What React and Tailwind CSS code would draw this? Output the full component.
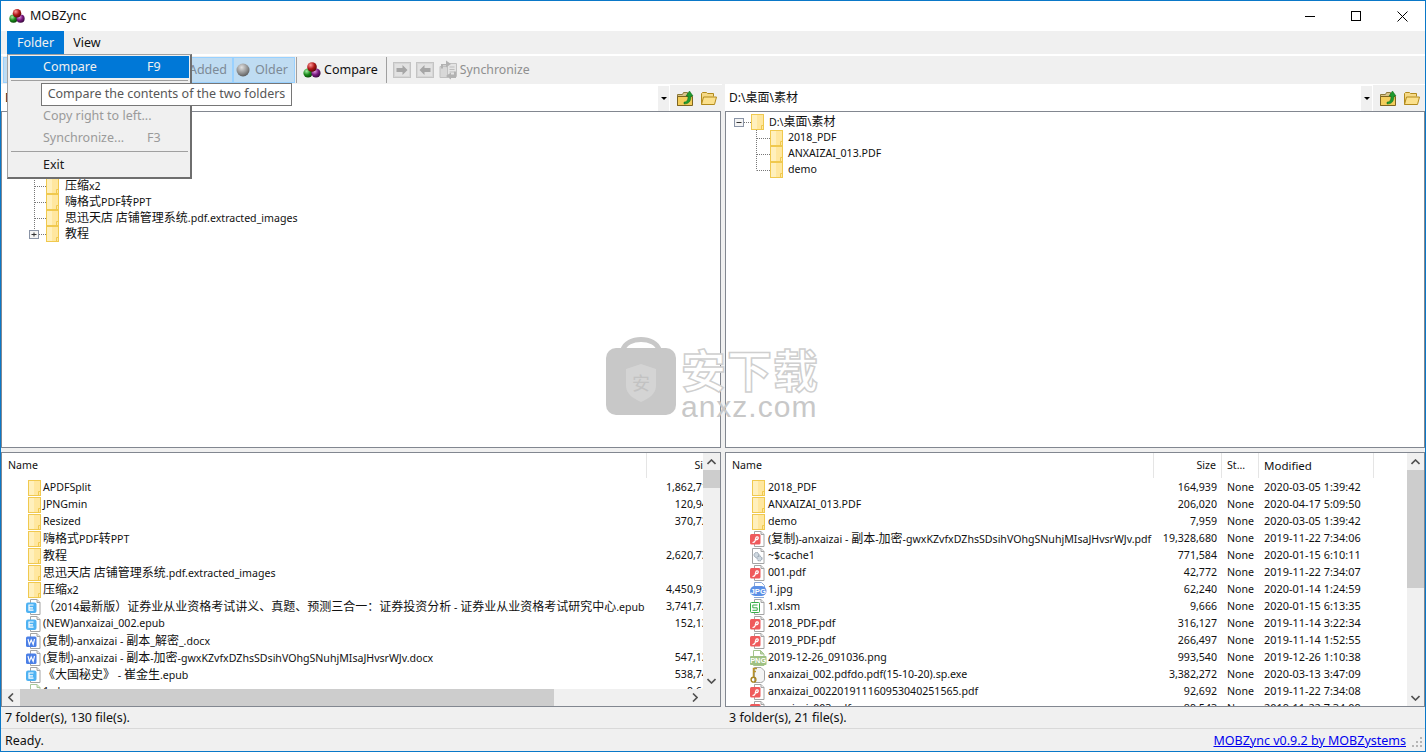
import React from "react";

const Balls = ({ s = 18 }) => (
  <svg width={s} height={s} viewBox="0 0 18 18" className="shrink-0">
    <defs>
      <radialGradient id="br" cx=".35" cy=".3" r=".8"><stop offset="0" stopColor="#ff9a9a" /><stop offset=".5" stopColor="#b01818" /><stop offset="1" stopColor="#4a0505" /></radialGradient>
      <radialGradient id="bg" cx=".35" cy=".3" r=".8"><stop offset="0" stopColor="#a5efa5" /><stop offset=".5" stopColor="#1a8a1a" /><stop offset="1" stopColor="#053a05" /></radialGradient>
      <radialGradient id="bp" cx=".35" cy=".3" r=".8"><stop offset="0" stopColor="#e8a0e8" /><stop offset=".5" stopColor="#7a1a80" /><stop offset="1" stopColor="#2a0530" /></radialGradient>
    </defs>
    <circle cx="5" cy="12" r="4.6" fill="url(#bg)" />
    <circle cx="13" cy="12" r="4.6" fill="url(#bp)" />
    <circle cx="9" cy="6" r="4.8" fill="url(#br)" />
  </svg>
);

const Folder = () => (
  <svg width="13" height="16" viewBox="0 0 13 16" className="shrink-0">
    <rect x=".5" y=".5" width="12" height="15" fill="#ffe79f" stroke="#f0c94f" />
    <rect x="1" y="1" width="5" height="14" fill="#fff0bd" />
    <path d="M10.500 15.500v-4h2" fill="none" stroke="#f0c94f" />
  </svg>
);

const Page = ({ stroke = "#a4a4a4" }) => (
  <>
    <path d="M4.500.5h6.500l3 3v12h-9.500z" fill="#fff" stroke={stroke} />
    <path d="M11 .5v3h3" fill="#e8e8e8" stroke={stroke} />
  </>
);

const Icon16 = ({ children }) => (
  <svg width="15" height="16" viewBox="0 0 15 16" className="shrink-0">{children}</svg>
);

const ICONS = {
  e: (
    <Icon16>
      <Page />
      <rect x="0" y="3.500" width="10.500" height="10.500" rx="2" fill="#4fb2f2" />
      <path d="M7.500 6H3v2.800h4M3 8.800v2.400h4.500" fill="none" stroke="#fff" strokeWidth="1.200" />
    </Icon16>
  ),
  w: (
    <Icon16>
      <Page />
      <rect x="0" y="3.500" width="10.500" height="10.500" rx="1.500" fill="#4b7fe6" />
      <path d="M2 6l1.300 5.500L5.200 7l2 4.500L8.500 6" fill="none" stroke="#fff" strokeWidth="1.100" />
    </Icon16>
  ),
  p: (
    <Icon16>
      <Page />
      <rect x="0" y="3" width="10.500" height="10.500" rx="1.500" fill="#ef5a5c" />
      <path d="M2.500 11.500c1.500 0 2.200-.6 2.500-1.500l1-3.500c.3-1 2.500-.9 2.300.6-.2 1.300-2 1.800-3.500 1.600" fill="none" stroke="#fff" strokeWidth="1.200" />
    </Icon16>
  ),
  j: (
    <svg width="17" height="16" viewBox="0 0 17 16" className="shrink-0">
      <path d="M4.500.5h7l3 3v4h-10z" fill="#fff" stroke="#8aa8d8" />
      <path d="M4 15.500h10" stroke="#8aa8d8" />
      <rect x="0" y="4" width="16.500" height="10" rx="5" fill="#5b90e6" />
      <text x="8.200" y="11.800" fontSize="7.600" textAnchor="middle" fill="#fff" fontFamily="Liberation Sans" fontWeight="bold">JPG</text>
    </svg>
  ),
  n: (
    <svg width="17" height="16" viewBox="0 0 17 16" className="shrink-0">
      <path d="M3.500.5h7l3.500 3.500v11.500h-10.500z" fill="#fff" stroke="#a4c48c" />
      <path d="M10.500.5V4h3.500z" fill="#bcd4a8" stroke="#a4c48c" />
      <rect x="0" y="6" width="16.500" height="9" rx="1" fill="#9fc182" />
      <text x="8.200" y="13" fontSize="7.400" textAnchor="middle" fill="#fff" fontFamily="Liberation Sans" fontWeight="bold">PNG</text>
    </svg>
  ),
  x: (
    <Icon16>
      <Page />
      <rect x=".5" y="3.500" width="9" height="10" rx="1" fill="#fff" stroke="#35ad47" />
      <path d="M7.500 6H2.800v2.800h4.400v2.500H2.500" fill="none" stroke="#35ad47" />
    </Icon16>
  ),
  k: (
    <Icon16>
      <path d="M4.500.5h6.500l3.500 3.500v8c0 2-2 3.500-4 3.500H4.500z" fill="#f4f4f4" stroke="#a4a4a4" />
      <circle cx="3.500" cy="12.700" r="2.400" fill="none" stroke="#a88420" strokeWidth="1.400" />
      <path d="M3.500 10V1.500h3.500M3.500 4.500h2.500" stroke="#b8932a" strokeWidth="1.500" fill="none" />
    </Icon16>
  ),
  g: (
    <Icon16>
      <path d="M2.500.5h8.500l3 3v12H2.500z" fill="#fff" stroke="#a4a4a4" />
      <path d="M11 .5v3h3" fill="#e8e8e8" stroke="#a4a4a4" />
      <circle cx="6.500" cy="7" r="2.500" fill="#cfd8e0" stroke="#8a98a6" strokeDasharray="1.500 .8" />
      <circle cx="9.500" cy="10.500" r="2.500" fill="#cfd8e0" stroke="#8a98a6" strokeDasharray="1.500 .8" />
    </Icon16>
  ),
  b: (
    <Icon16>
      <path d="M4.500.5h6.500l3 3v12h-9.500z" fill="#fff" stroke="#a8c89a" />
      <path d="M11 .5v3h3" fill="#dcebd0" stroke="#a8c89a" />
    </Icon16>
  ),
};

const leftRows = [
  ["f", "APDFSplit", "1,862,712"],
  ["f", "JPNGmin", "120,948"],
  ["f", "Resized", "370,725"],
  ["f", "嗨格式PDF转PPT", ""],
  ["f", "教程", "2,620,733"],
  ["f", "思迅天店 店铺管理系统.pdf.extracted_images", ""],
  ["f", "压缩x2", "4,450,916"],
  ["e", "（2014最新版）证券业从业资格考试讲义、真题、预测三合一：证券投资分析 - 证券业从业资格考试研究中心.epub", "3,741,720"],
  ["e", "(NEW)anxaizai_002.epub", "152,134"],
  ["w", "(复制)-anxaizai - 副本_解密_.docx", ""],
  ["w", "(复制)-anxaizai - 副本-加密-gwxKZvfxDZhsSDsihVOhgSNuhjMIsaJHvsrWJv.docx", "547,128"],
  ["e", "《大国秘史》 - 崔金生.epub", "538,740"],
  ["b", "1.xlsm", "9,666"],
];

const rightRows = [
  ["f", "2018_PDF", "164,939", "2020-03-05 1:39:42"],
  ["f", "ANXAIZAI_013.PDF", "206,020", "2020-04-17 5:09:50"],
  ["f", "demo", "7,959", "2020-03-05 1:39:42"],
  ["p", "(复制)-anxaizai - 副本-加密-gwxKZvfxDZhsSDsihVOhgSNuhjMIsaJHvsrWJv.pdf", "19,328,680", "2019-11-22 7:34:06"],
  ["g", "~$cache1", "771,584", "2020-01-15 6:10:11"],
  ["p", "001.pdf", "42,772", "2019-11-22 7:34:07"],
  ["j", "1.jpg", "62,240", "2020-01-14 1:24:59"],
  ["x", "1.xlsm", "9,666", "2020-01-15 6:13:35"],
  ["p", "2018_PDF.pdf", "316,127", "2019-11-14 3:22:34"],
  ["p", "2019_PDF.pdf", "266,497", "2019-11-14 1:52:55"],
  ["n", "2019-12-26_091036.png", "993,540", "2019-12-26 1:10:38"],
  ["k", "anxaizai_002.pdfdo.pdf(15-10-20).sp.exe", "3,382,272", "2020-03-13 3:47:09"],
  ["p", "anxaizai_002201911160953040251565.pdf", "92,692", "2019-11-22 7:34:08"],
  ["p", "anxaizai_003.pdf", "89,543", "2019-11-22 7:34:09"],
];

/* Latin runs take the parent's small size, Chinese runs stay at 12px */
const T = ({ children }) =>
  String(children)
    .split(/([\u3000-\u9fff\uff00-\uffef]+)/)
    .map((part, i) =>
      i % 2 ? (
        <span key={i} className="text-[12px]">{part}</span>
      ) : (
        <span key={i}>{part}</span>
      )
    );

const Conn = ({ kind }) => (
  <svg width="18" height="16" viewBox="0 0 18 16" className="shrink-0">
    <path d={kind === "plus" ? "M6.500 0v8.500" : "M6.500 0v16"} stroke="#777" strokeDasharray="1 1" fill="none" />
    <path d="M7 8.500h11" stroke="#777" strokeDasharray="1 1" fill="none" />
    {kind === "plus" && (
      <>
        <rect x="1.500" y="4.500" width="9" height="8" fill="#f4f4f4" stroke="#8a94a6" />
        <path d="M3.500 8.500h5M6 6.500v4" stroke="#333" />
      </>
    )}
  </svg>
);

const LTree = ({ kind, name }) => (
  <div className="flex h-4 items-center pl-[26px]">
    <Conn kind={kind} />
    <Folder />
    <span className="ml-[6px] whitespace-nowrap"><T>{name}</T></span>
  </div>
);

const RChild = ({ name, last }) => (
  <div className="flex h-4 items-center pl-[30px]">
    <svg width="14" height="16" viewBox="0 0 14 16" className="shrink-0">
      <path d={last ? "M.5 0v8.500" : "M.5 0v16"} stroke="#777" strokeDasharray="1 1" fill="none" />
      <path d="M1 8.500h13" stroke="#777" strokeDasharray="1 1" fill="none" />
    </svg>
    <Folder />
    <span className="ml-[5px] -translate-y-px whitespace-nowrap"><T>{name}</T></span>
  </div>
);

const Arrow = ({ d }) => (
  <svg width="9" height="6" viewBox="0 0 9 6" className="shrink-0">
    <path d={d} fill="none" stroke="#505050" strokeWidth="1.600" />
  </svg>
);

const VScroll = ({ thumb }) => (
  <div className="flex w-[17px] shrink-0 flex-col bg-[#f0f0f0]">
    <div className="flex h-[17px] shrink-0 items-center justify-center"><Arrow d="M.5 5l4-4 4 4" /></div>
    <div className={`shrink-0 bg-[#cdcdcd] ${thumb}`} />
    <div className="flex-1" />
    <div className="flex h-[17px] shrink-0 items-center justify-center"><Arrow d="M.5 1l4 4 4-4" /></div>
  </div>
);

const HeadCell = ({ className, children, sep = true }) => (
  <div className={`flex h-full shrink-0 items-center overflow-hidden whitespace-nowrap ${sep ? "border-r border-[#e5e5e5]" : ""} ${className}`}>{children}</div>
);

const PathBar = ({ path, grow }) => (
  <div className={`flex h-[27px] bg-white ${grow}`}>
    <div className="flex min-w-0 flex-1 items-center pl-[4px] whitespace-nowrap">{path}</div>
    <div className="mt-[2px] flex h-[25px] w-[11px] shrink-0 items-center justify-center bg-[#f0f0f0]">
      <div className="h-0 w-0 border-x-[3px] border-t-[3px] border-x-transparent border-t-black" />
    </div>
    <div className="ml-[1px] mt-[1px] flex h-[26px] w-[52px] shrink-0 items-center gap-[6px] bg-[#f0f0f0] pl-[7px]">
      <svg width="17" height="16" viewBox="0 0 17 16">
        <path d="M.5 4.500h5l1-2h4v13h-10z" fill="#d8c48a" stroke="#8c7a3c" />
        <path d="M.5 6.500h15v9h-15z" fill="#f3cd5b" stroke="#7d6420" />
        <path d="M7 12c3 0 4-2 4-6H9l3.500-5L16 6h-2c0 5-2 8-7 8z" fill="#1f9a2e" stroke="#0f6b1a" strokeWidth=".5" />
      </svg>
      <svg width="17" height="15" viewBox="0 0 17 15">
        <path d="M1.500 13.500v-11l1-1h4l1 1h6v3" fill="#f5d987" stroke="#b28a1c" />
        <path d="M1.500 13.500l2-7.500h13l-2 7.500z" fill="#fbe08c" stroke="#b28a1c" />
      </svg>
    </div>
  </div>
);

const GrayArrow = ({ flip }) => (
  <svg width="18" height="16" viewBox="0 0 18 16" className="shrink-0">
    <rect x=".5" y=".5" width="17" height="15" fill="#d6d6d6" stroke="#c4c4c4" />
    <rect x="2" y="2" width="14" height="12" fill="#e2e2e2" />
    <path d={flip ? "M3.500 8l5-5v3h6v4h-6v3z" : "M14.500 8l-5-5v3h-6v4h6v3z"} fill="#a6a6a6" />
  </svg>
);

const Item = ({ label, key2, cls = "" }) => (
  <div className={`flex h-[22px] items-center pl-[33px] ${cls}`}>
    <span className="w-[104px] whitespace-nowrap">{label}</span>
    <span>{key2}</span>
  </div>
);

const Menu = () => (
  <div className="absolute left-[6px] top-[53px] z-20 w-[185px] border border-[#a0a0a0] border-r-2 border-b-2 border-r-[#6e6e6e] border-b-[#6e6e6e] bg-[#f0f0f0] pb-[1px] pl-[2px] pr-[1px] pt-[1px] text-[12.5px] text-[#1a1a1a]">
    <Item label="Compare" key2="F9" cls="bg-[#0078d7] text-[#f0f0f0]" />
    <div className="mx-[1px] my-[2px] h-px bg-[#a0a0a0]" />
    <Item label="Copy left to right..." cls="text-[#9a9a9a]" />
    <Item label="Copy right to left..." cls="text-[#9a9a9a]" />
    <Item label="Synchronize..." key2="F3" cls="text-[#9a9a9a]" />
    <div className="mx-[1px] my-[2px] h-px bg-[#a0a0a0]" />
    <Item label="Exit" />
  </div>
);

export default function App() {
  return (
    <div className="relative flex h-[752px] w-full flex-col overflow-hidden border border-[#0a78c8] bg-[#f0f0f0] text-[12.5px] leading-none text-[#111] font-['Noto_Sans','Noto_Sans_CJK_SC',sans-serif]">
      {/* Title bar */}
      <div className="flex h-[30px] shrink-0 items-center bg-white">
        <div className="ml-[8px]"><Balls s={16} /></div>
        <span className="ml-[5px]">MOBZync</span>
        <div className="ml-auto flex h-full items-center">
          <div className="flex w-[46px] justify-center"><div className="h-px w-[10px] bg-black" /></div>
          <div className="flex w-[46px] justify-center"><div className="h-[10px] w-[10px] border border-black" /></div>
          <div className="flex w-[46px] justify-center">
            <svg width="11" height="11" viewBox="0 0 11 11"><path d="M.5.5l10 10M10.500.5l-10 10" stroke="#000" fill="none" /></svg>
          </div>
        </div>
      </div>
      {/* Menu bar */}
      <div className="flex h-[23px] shrink-0 items-stretch bg-[#f0f0f0] pl-[6px]">
        <div className="flex w-[57px] items-center justify-center bg-[#0078d7] pt-[1px] text-[#f0f0f0]">Folder</div>
        <div className="flex w-[46px] items-center justify-center pt-[1px]">View</div>
      </div>
      <div className="h-[2px] shrink-0 bg-white" />
      {/* Toolbar */}
      <div className="flex h-[28px] shrink-0 items-center bg-[#f0f0f0] pl-[2px]">
        <div className="flex h-[26px] w-[172px] shrink-0 items-center border border-[#99d1ff] bg-[#bfdcf2]" />
        <div className="flex h-[26px] w-[58px] shrink-0 items-center justify-end border border-[#99d1ff] bg-[#bfdcf2] pr-[5px] pt-[1px] text-[#7d8a96]">Added</div>
        <div className="flex h-[26px] w-[62px] shrink-0 items-center border border-[#99d1ff] bg-[#bfdcf2] pl-[2px] text-[#7d8a96]">
          <svg width="14" height="14" viewBox="0 0 14 14">
            <defs><radialGradient id="gb" cx=".4" cy=".3" r=".8"><stop offset="0" stopColor="#e0e0e0" /><stop offset=".6" stopColor="#8a8a8a" /><stop offset="1" stopColor="#4a4a4a" /></radialGradient></defs>
            <circle cx="7" cy="7" r="6.500" fill="url(#gb)" />
          </svg>
          <span className="ml-[5px] pt-[1px]">Older</span>
        </div>
        <div className="ml-[1px] h-[26px] w-px shrink-0 bg-[#a0a0a0]" />
        <div className="ml-[6px] flex items-center"><Balls /><span className="ml-[3px] pt-[1px]">Compare</span></div>
        <div className="ml-[8px] h-[26px] w-px shrink-0 bg-[#a0a0a0]" />
        <div className="ml-[6px] flex items-center gap-[5px] text-[#8f8f8f]">
          <GrayArrow />
          <GrayArrow flip />
          <svg width="19" height="20" viewBox="0 0 19 20" className="shrink-0">
            <path d="M1 6.500h8v11H1z" fill="#d8d8d8" stroke="#c0c0c0" />
            <path d="M8.500 3.500h9v13h-9z" fill="#e4e4e4" stroke="#c0c0c0" />
            <path d="M10.500 7h5M10.500 9.500h5M10.500 12h5" stroke="#bdbdbd" />
            <path d="M7 .5l5 3.500-5 3.500V5.500H4v3H2V4h5zM12 19.500L7 16l5-3.500v2h3v-3h2V18h-5z" fill="#b2b2b2" />
          </svg>
          <span className="-ml-[3px] pt-[1px] text-[12.3px]">Synchronize</span>
        </div>
      </div>
      {/* Path bars */}
      <div className="flex h-[27px] shrink-0 gap-[3px] text-[12px]">
        <PathBar path="D:\" grow="w-[721px] shrink-0" />
        <PathBar path="D:\桌面\素材" grow="flex-1" />
      </div>
      {/* Trees */}
      <div className="flex h-[337px] shrink-0 gap-[4px] text-[10.6px]">
        <div className="w-[720px] shrink-0 overflow-hidden border border-[#828790] bg-white pt-[2px]">
          <div className="flex h-4 items-center pl-[13px]"><Folder /><span className="ml-[5px]">D:\</span></div>
          <LTree kind="mid" name="APDFSplit" />
          <LTree kind="mid" name="JPNGmin" />
          <LTree kind="mid" name="Resized" />
          <LTree kind="mid" name="压缩x2" />
          <LTree kind="mid" name="嗨格式PDF转PPT" />
          <LTree kind="mid" name="思迅天店 店铺管理系统.pdf.extracted_images" />
          <LTree kind="plus" name="教程" />
        </div>
        <div className="min-w-0 flex-1 overflow-hidden border border-[#828790] bg-white pt-[2px]">
          <div className="flex h-4 items-center pl-[8px]">
            <svg width="17" height="16" viewBox="0 0 17 16" className="shrink-0">
              <rect x=".5" y="4.500" width="9" height="8" fill="#f4f4f4" stroke="#8a94a6" />
              <path d="M2.500 8.500h5" stroke="#333" />
              <path d="M10 8.500h7" stroke="#777" strokeDasharray="1 1" />
            </svg>
            <Folder />
            <span className="ml-[5px]"><T>D:\桌面\素材</T></span>
          </div>
          <RChild name="2018_PDF" />
          <RChild name="ANXAIZAI_013.PDF" />
          <RChild name="demo" last />
        </div>
      </div>
      <div className="h-[4px] shrink-0" />
      {/* Lists */}
      <div className="flex h-[255px] shrink-0 gap-[4px] text-[10.6px]">
        <div className="flex w-[720px] shrink-0 flex-col overflow-hidden border border-[#828790] bg-white">
          <div className="flex min-h-0 flex-1">
            <div className="min-w-0 flex-1 overflow-hidden">
              <div className="flex h-[26px] w-[760px] items-center pb-[1px]">
                <HeadCell className="w-[645px] pl-[6px]">Name</HeadCell>
                <HeadCell className="w-[72px] justify-end pr-[5px]" sep={false}>Size</HeadCell>
              </div>
              {leftRows.map(([ic, n, s], i) => (
                <div key={i} className="flex h-[17px] w-[760px] items-center">
                  <div className="flex w-[645px] shrink-0 items-center overflow-hidden whitespace-nowrap pl-[24px]">
                    <div className="flex w-[17px] shrink-0">{ic === "f" ? <div className="ml-[2px]"><Folder /></div> : ICONS[ic]}</div>
                    <span><T>{n}</T></span>
                  </div>
                  <div className="w-[72px] shrink-0 pr-[5px] text-right">{s}</div>
                </div>
              ))}
            </div>
            <VScroll thumb="h-[18px]" />
          </div>
          <div className="flex h-[17px] shrink-0 bg-[#f0f0f0]">
            <div className="flex w-[18px] shrink-0 items-center justify-center">
              <svg width="6" height="9" viewBox="0 0 6 9"><path d="M5 .5l-4 4 4 4" fill="none" stroke="#505050" strokeWidth="1.600" /></svg>
            </div>
            <div className="w-[534px] shrink-0 bg-[#cdcdcd]" />
            <div className="flex-1" />
            <div className="mr-[17px] flex w-[17px] shrink-0 items-center justify-center">
              <svg width="6" height="9" viewBox="0 0 6 9"><path d="M1 .5l4 4-4 4" fill="none" stroke="#505050" strokeWidth="1.600" /></svg>
            </div>
          </div>
        </div>
        <div className="flex min-w-0 flex-1 overflow-hidden border border-[#828790] bg-white">
          <div className="min-w-0 flex-1 overflow-hidden">
            <div className="flex h-[26px] items-center pb-[1px]">
              <HeadCell className="w-[428px] pl-[6px]">Name</HeadCell>
              <HeadCell className="w-[68px] justify-end pr-[5px]">Size</HeadCell>
              <HeadCell className="w-[37px] pl-[5px]">St...</HeadCell>
              <HeadCell className="w-[115px] pl-[5px]"><span className="text-[11.5px]">Modified</span></HeadCell>
            </div>
            {rightRows.map(([ic, n, s, m], i) => (
              <div key={i} className="flex h-[17px] items-center whitespace-nowrap">
                <div className="flex w-[428px] shrink-0 items-center overflow-hidden pl-[24px]">
                  <div className="flex w-[18px] shrink-0">{ic === "f" ? <div className="ml-[2px]"><Folder /></div> : ICONS[ic]}</div>
                  <span><T>{n}</T></span>
                </div>
                <div className="w-[68px] shrink-0 pr-[5px] text-right">{s}</div>
                <div className="w-[37px] shrink-0 pl-[5px]">None</div>
                <div className="w-[115px] shrink-0 pl-[5px] text-[10.9px]">{m}</div>
              </div>
            ))}
          </div>
          <VScroll thumb="h-[118px]" />
        </div>
      </div>
      {/* Count bar */}
      <div className="flex h-[22px] shrink-0 items-center border-b border-[#d9d9d9] pt-[1px]">
        <div className="w-[724px] shrink-0 pl-[4px]">7 folder(s), 130 file(s).</div>
        <div className="pl-[4px]">3 folder(s), 21 file(s).</div>
      </div>
      {/* Status bar */}
      <div className="flex min-h-0 flex-1 items-center pl-[4px] pt-[2px]">
        <span>Ready.</span>
        <a href="#" className="ml-auto text-[#0000ee] underline">MOBZync v0.9.2 by MOBZystems</a>
        <svg width="12" height="12" viewBox="0 0 12 12" className="ml-[5px] mr-[2px]">
          <path d="M9 2h2v2H9zM5 6h2v2H5zM9 6h2v2H9zM1 10h2v2H1zM5 10h2v2H5zM9 10h2v2H9z" fill="#b5b5b5" />
        </svg>
      </div>

      <Menu />

      {/* Tooltip */}
      <div className="absolute left-[40px] top-[82px] z-30 flex h-[23px] w-[251px] items-center justify-center whitespace-nowrap border border-[#767676] bg-white text-[#575757]">
        Compare the contents of the two folders
      </div>

      {/* Watermark */}
      <div className="pointer-events-none absolute left-[604px] top-[333px] z-10 flex items-start">
        <svg width="72" height="82" viewBox="0 0 72 82" className="shrink-0">
          <path d="M18 16c3-14 33-14 36 0" fill="none" stroke="#c8c8c8" strokeWidth="5" />
          <rect x="1" y="14" width="70" height="67" rx="10" fill="#c8c8c8" />
          <path d="M36 30l15 5v17c0 8-8 13-15 16-7-3-15-8-15-16V35z" fill="#d4d4d4" />
          <text x="36" y="56" fontSize="18" textAnchor="middle" fill="#c2c2c2" fontFamily="Noto Sans CJK SC">安</text>
        </svg>
        <div className="ml-[4px] flex flex-col">
          <div className="mt-[14px] text-[45px] font-bold leading-[46px] tracking-[1px] text-white [-webkit-text-stroke:1.500px_#cfcfcf]">安下载</div>
          <div className="text-[30px] leading-[26px] tracking-[1px] text-[#c8c8c8] font-['Liberation_Sans',sans-serif]">anxz.com</div>
        </div>
      </div>
    </div>
  );
}
